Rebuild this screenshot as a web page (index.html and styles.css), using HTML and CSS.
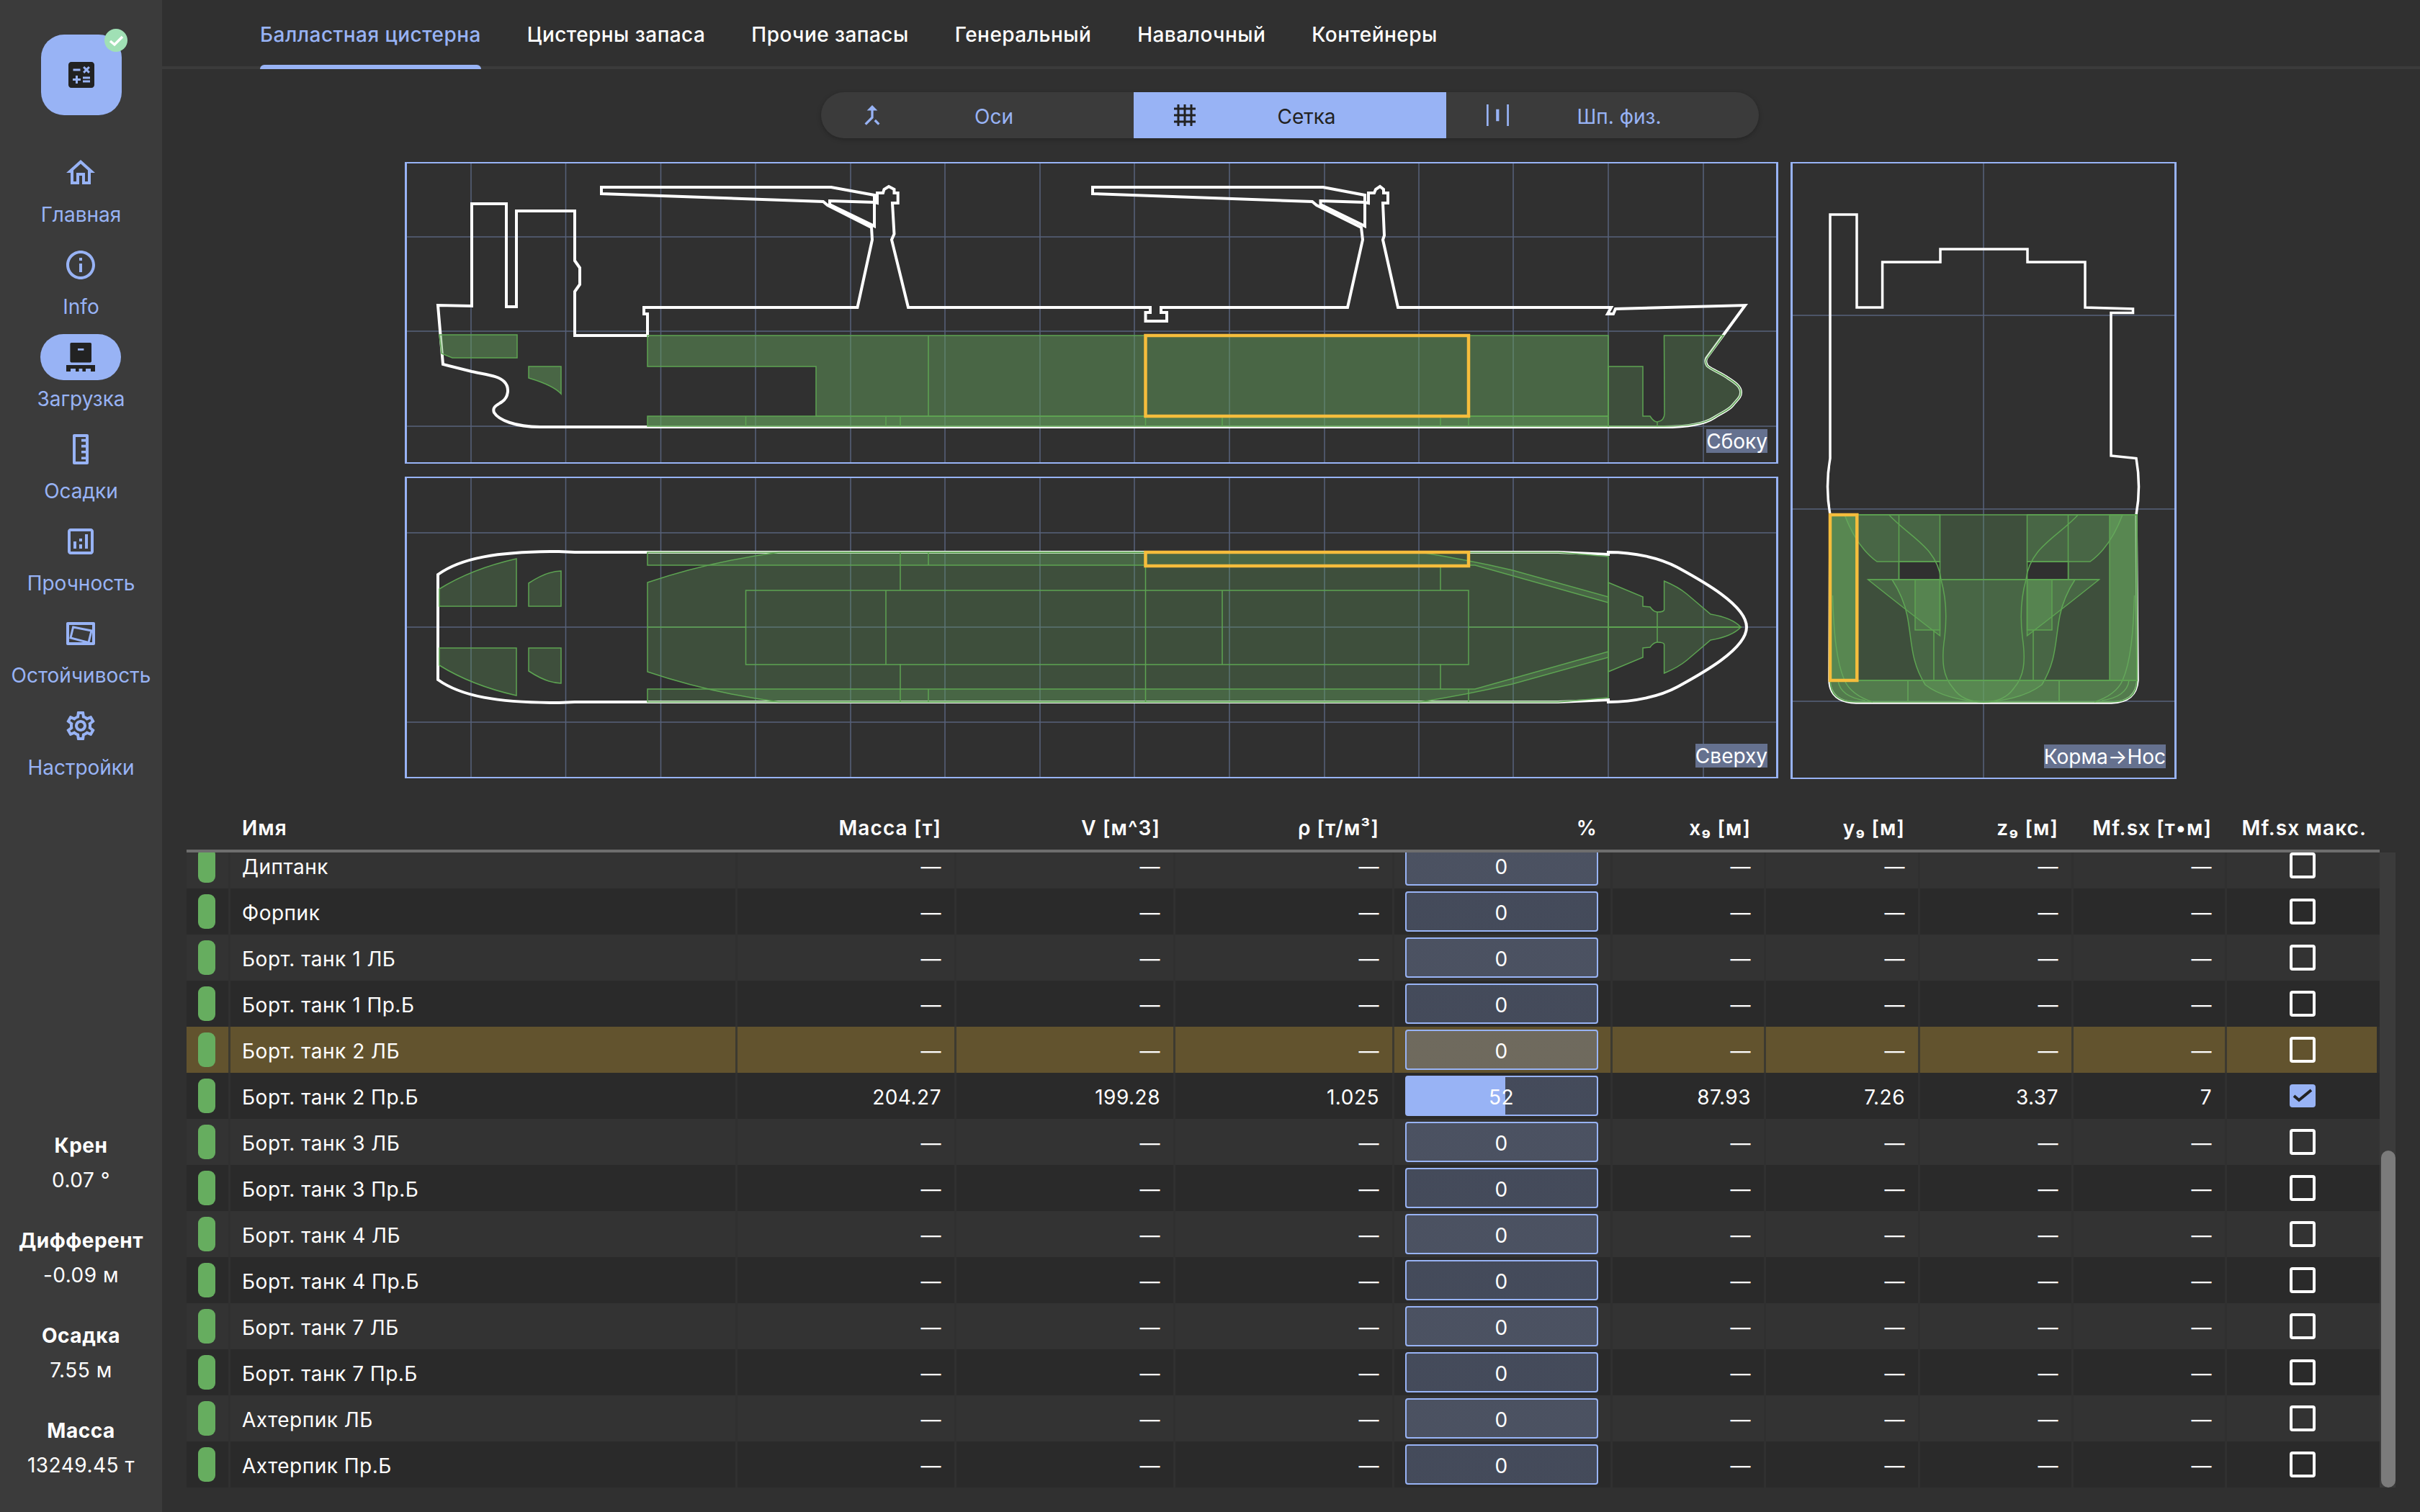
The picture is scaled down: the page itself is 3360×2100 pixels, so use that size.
FILE: index.html
```html
<!DOCTYPE html>
<html lang="ru">
<head>
<meta charset="utf-8">
<title>Загрузка</title>
<link rel="stylesheet" href="styles.css">
</head>
<body>
<aside class="sidebar">
  <div class="logo">
    <svg class="logo-icon" viewBox="0 0 24 24"><path d="M19 3H5c-1.1 0-2 .9-2 2v14c0 1.1.9 2 2 2h14c1.1 0 2-.9 2-2V5c0-1.1-.9-2-2-2zm-5.97 4.06L14.09 6l1.41 1.41L16.91 6l1.06 1.06-1.41 1.41 1.41 1.41-1.06 1.06-1.41-1.4-1.41 1.41-1.06-1.06 1.41-1.41-1.41-1.42zm-6.78.66h5v1.5h-5v-1.5zM11.5 16h-2v2H8v-2H6v-1.5h2v-2h1.5v2h2V16zm6.5 1.25h-5v-1.5h5v1.5zm0-2.5h-5v-1.5h5v1.5z"/></svg>
    <span class="badge"><svg viewBox="0 0 32 32"><path d="M8 17l6 5 11-11"/></svg></span>
  </div>
  <nav class="nav">
    <a class="nav-item"><span class="pill"><svg viewBox="0 0 24 24"><path d="M12 5.69l5 4.5V18h-2v-6H9v6H7v-7.81l5-4.5M12 3L2 12h3v8h6v-6h2v6h6v-8h3L12 3z"/></svg></span><span class="nav-label">Главная</span></a>
    <a class="nav-item"><span class="pill"><svg viewBox="0 0 24 24"><path d="M11 7h2v2h-2zm0 4h2v6h-2zm1-9C6.48 2 2 6.48 2 12s4.48 10 10 10 10-4.48 10-10S17.52 2 12 2zm0 18c-4.41 0-8-3.59-8-8s3.59-8 8-8 8 3.59 8 8-3.59 8-8 8z"/></svg></span><span class="nav-label">Info</span></a>
    <a class="nav-item active"><span class="pill"><svg viewBox="0 0 24 24"><path d="M5.5 2h13.2c.4 0 .8.4.8.8v12.1c0 .4-.4.8-.8.8H5.5c-.4 0-.8-.4-.8-.8V2.800c0-.4.4-.8.8-.8zM10 6v1.400h4.200V6zM2 17.500h20V22h-3v-2h-3.500v2h-2.300v-2h-2.400v2H8.500v-2H5v2H2z" fill-rule="evenodd"/></svg></span><span class="nav-label">Загрузка</span></a>
    <a class="nav-item"><span class="pill"><svg viewBox="0 0 24 24"><path fill-rule="evenodd" d="M7.500 1.500h9c.6 0 1 .4 1 1v19c0 .6-.4 1-1 1h-9c-.6 0-1-.4-1-1v-19c0-.6.4-1 1-1zM8.500 3.500v17h7V19h-3v-1.800h3v-2.400h-3V13h3v-2.300h-3V8.900h3V6.700h-3V4.900h3V3.500z"/></svg></span><span class="nav-label">Осадки</span></a>
    <a class="nav-item"><span class="pill"><svg viewBox="0 0 24 24"><path d="M19 3H5c-1.100 0-2 .9-2 2v14c0 1.100.9 2 2 2h14c1.100 0 2-.9 2-2V5c0-1.100-.9-2-2-2zm0 16H5V5h14v14zM7 12h2v5H7zm8-5h2v10h-2zm-4 7h2v3h-2zm0-4h2v2h-2z"/></svg></span><span class="nav-label">Прочность</span></a>
    <a class="nav-item"><span class="pill"><svg viewBox="0 0 24 24"><path fill-rule="evenodd" d="M3 4h18c.6 0 1 .4 1 1v14c0 .6-.4 1-1 1H3c-.6 0-1-.4-1-1V5c0-.6.4-1 1-1zm1 2v12h16V6z"/><path class="tilt" d="M6.800 7.500L19.500 10l-2 8.200L5 15z"/></svg></span><span class="nav-label">Остойчивость</span></a>
    <a class="nav-item"><span class="pill"><svg viewBox="0 0 24 24"><path d="M19.430 12.980c.04-.32.07-.64.07-.98 0-.34-.03-.66-.07-.98l2.110-1.650c.19-.15.24-.42.12-.64l-2-3.460c-.09-.16-.26-.25-.44-.25-.06 0-.12.01-.17.03l-2.490 1c-.52-.4-1.080-.73-1.690-.98l-.38-2.650C14.460 2.180 14.250 2 14 2h-4c-.25 0-.46.18-.49.42l-.38 2.650c-.61.25-1.170.59-1.690.98l-2.490-1c-.06-.02-.12-.03-.18-.03-.17 0-.34.09-.43.25l-2 3.460c-.13.22-.07.49.12.64l2.110 1.650c-.04.32-.07.65-.07.98 0 .33.03.66.07.98l-2.110 1.650c-.19.15-.24.42-.12.64l2 3.460c.09.16.26.25.44.25.06 0 .12-.01.17-.03l2.490-1c.52.4 1.080.73 1.690.98l.38 2.650c.03.24.24.42.49.42h4c.25 0 .46-.18.49-.42l.38-2.650c.61-.25 1.170-.59 1.690-.98l2.490 1c.06.02.12.03.18.03.17 0 .34-.09.43-.25l2-3.460c.12-.22.07-.49-.12-.64l-2.110-1.650zm-1.980-1.710c.04.31.05.52.05.73 0 .21-.02.43-.05.73l-.14 1.130.89.7 1.080.84-.7 1.210-1.270-.51-1.040-.42-.9.68c-.43.32-.84.56-1.250.73l-1.060.43-.16 1.130-.2 1.350h-1.400l-.19-1.350-.16-1.130-1.060-.43c-.43-.18-.83-.41-1.230-.71l-.91-.7-1.060.43-1.270.51-.7-1.210 1.080-.84.89-.7-.14-1.130c-.03-.31-.05-.54-.05-.74s.02-.43.05-.73l.14-1.130-.89-.7-1.080-.84.7-1.210 1.270.51 1.040.42.9-.68c.43-.32.84-.56 1.250-.73l1.060-.43.16-1.130.2-1.350h1.390l.19 1.350.16 1.130 1.060.43c.43.18.83.41 1.230.71l.91.7 1.060-.43 1.270-.51.7 1.210-1.070.85-.89.7.14 1.130zM12 8c-2.210 0-4 1.790-4 4s1.790 4 4 4 4-1.790 4-4-1.790-4-4-4zm0 6c-1.100 0-2-.9-2-2s.9-2 2-2 2 .9 2 2-.9 2-2 2z"/></svg></span><span class="nav-label">Настройки</span></a>
  </nav>
  <div class="stats">
    <div class="stat"><b>Крен</b><span>0.07 °</span></div>
    <div class="stat"><b>Дифферент</b><span>-0.09 м</span></div>
    <div class="stat"><b>Осадка</b><span>7.55 м</span></div>
    <div class="stat"><b>Масса</b><span>13249.45 т</span></div>
  </div>
</aside>

<main class="main">
  <div class="tabs">
    <a class="tab active">Балластная цистерна</a>
    <a class="tab">Цистерны запаса</a>
    <a class="tab">Прочие запасы</a>
    <a class="tab">Генеральный</a>
    <a class="tab">Навалочный</a>
    <a class="tab">Контейнеры</a>
  </div>

  <div class="segments">
    <a class="seg"><svg viewBox="1 1 22 22"><path d="M17 20.410L18.410 19 15 15.590 13.590 17 17 20.410zM7.500 8H11v5.590L5.590 19 7 20.410l6-6V8h3.500L12 3.500 7.500 8z"/></svg><span>Оси</span></a>
    <a class="seg active"><svg viewBox="0 0 24 24"><path d="M22 7V5h-3V2h-2v3h-4V2h-2v3H7V2H5v3H2v2h3v4H2v2h3v4H2v2h3v3h2v-3h4v3h2v-3h4v3h2v-3h3v-2h-3v-4h3v-2h-3V7h3zM7 7h4v4H7V7zm0 10v-4h4v4H7zm10 0h-4v-4h4v4zm0-6h-4V7h4v4z"/></svg><span>Сетка</span></a>
    <a class="seg"><svg viewBox="0 0 24 24"><path d="M2 2h1.800v20H2zM20.800 2h1.800v20h-1.800zM10.800 6.500h2.800v11h-2.800z"/></svg><span>Шп. физ.</span></a>
  </div>

  <div class="views">
    <section class="view view-side">
      <svg class="plot" viewBox="565 227 1901 415">
        <g class="grid">
          <path d="M654 227V642M785.500 227V642M917.500 227V642M1049 227V642M1181 227V642M1312 227V642M1444 227V642M1575 227V642M1707 227V642M1839 227V642M1970 227V642M2101 227V642M2233 227V642M2365 227V642M564 329H2467M564 460H2467M564 592H2467"/>
        </g>
        <path class="hull" d="M798 466L798 405 805 395 805 372 798 362 798 293 717 293 717 426 703 426 703 283 655 283 655 425 608 424 615 506 655 516C678 521 692 522 700 530C708 538 706 552 697 558C690 563 683 565 686 573C692 583 715 593 750 593L2310 593C2335 593 2365 590 2380 580C2392 572 2400 570 2405.600 563C2412 555 2417 552 2417 545C2417 537 2410 532 2399 525C2390 518 2375 513 2370.500 508C2367 503 2368 500 2369.500 497L2423 424 2243 429 2240 436 2232 436 2237 427 1941 427 1920 333 1922 327 1920 282 1927 282 1927 268 1921 268 1921 263 1916 259 1910 263 1908 268 1900 268 1900 282 1895 281 1895 271 1837 260 1517 260 1517 269 1822 280 1828 285 1890 316 1892 333 1871 427 1612 427 1612 434 1620 434 1620 446 1590.500 446 1590.500 434 1597 434 1597 427 1261 427 1238 333 1241.500 325 1239 282 1246.700 282 1246.700 268 1241.500 268 1241.500 263 1234 259 1227.500 263 1226 268 1218 268 1218 282 1214 281 1214 271 1154 260 835 260 835 269 1143 280 1149 285 1210 316 1211 333 1190.500 427 894 427 894 436 899 436 899 466Z"/>
        <path class="hull" d="M1152 279L1214 281 1214 314 1152 284ZM1833.500 279L1895 281 1895 314 1833.500 284Z"/>
        <path class="f2" d="M610 465H718V497H628L613 491Z"/>
        <path class="f2" d="M734 509H779V547Q768 535 734 525Z"/>
        <path class="f2" d="M899 466H2233V578H1133V509H899Z"/>
        <path class="f3" d="M899 578H2233V592H899Z"/>
        <path class="f" d="M2233 509H2281V578H2291Q2296 586 2301 586Q2312 584 2311 572L2310.500 466H2393L2370.500 497C2368 500 2367 503 2370.500 508C2375 513 2390 518 2399 525C2410 532 2417 537 2417 545C2417 552 2412 555 2405.600 563C2400 570 2392 572 2380 580C2365 590 2335 592 2310 592H2233Z"/>
        <path class="l" d="M1289 466V578M1035.500 578V592M1230 578V592M1250 578V592M1590.500 578V592M1697 578V592M2000 578V592M2039 578V592M2301 586V592"/>
        <rect class="sel" x="1590.500" y="466" width="448.500" height="112"/>
      </svg>
      <span class="cap">Сбоку</span>
    </section>

    <section class="view view-top">
      <svg class="plot" viewBox="565 664 1901 415">
        <defs>
          <g id="top-half">
            <path class="f" d="M610 818Q655 790 717 776V842H610Z"/>
            <path class="f" d="M734 810Q760 793 779 793V842H734Z"/>
            <path class="f" d="M899 767H1972Q2040 778 2100 792L2233 829V837L2048 785H899Z"/>
            <path class="l" d="M1250 767V820M1289 767V785M1590.500 767V871M2000 785V820M2039 767V785"/>
            <path class="f" d="M2233 809L2281 829V842L2291 843Q2296 850 2301 850Q2310 850 2310.600 847V807Q2330 815 2342 825L2375 853Q2405 858 2417 871H2233Z"/>
          </g>
        </defs>
        <g class="grid">
          <path d="M654 664V1079M785.500 664V1079M917.500 664V1079M1049 664V1079M1181 664V1079M1312 664V1079M1444 664V1079M1575 664V1079M1707 664V1079M1839 664V1079M1970 664V1079M2101 664V1079M2233 664V1079M2365 664V1079M564 740H2467M564 871H2467M564 1003H2467"/>
        </g>
        <path class="hull" d="M608 798C640 775 690 766 776 766L798 767 2163 767 2233 770V767C2270 767 2305 775 2329 788C2360 805 2425 840 2425 871C2425 902 2360 937 2329 954C2305 967 2270 975 2233 975V972L2163 975 798 975 776 976C690 976 640 967 608 944Z"/>
        <path class="f" d="M899 809Q985 780 1082 767H2163L2233 773V969L2163 975H1082Q985 962 899 933Z"/>
        <use href="#top-half"/>
        <use href="#top-half" transform="matrix(1 0 0 -1 0 1742)"/>
        <path class="l" d="M899 871H1035.500M2039 871H2417M2301 850V892"/>
        <rect class="l" x="1035.500" y="820" width="1003.500" height="103"/>
        <path class="l" d="M1230 820V923M1697 820V923"/>
        <rect class="sel" x="1590.500" y="767" width="448.500" height="19"/>
      </svg>
      <span class="cap">Сверху</span>
    </section>

    <section class="view view-back">
      <svg class="plot" viewBox="2489 227 530 853">
        <defs>
          <g id="back-half">
            <path class="f" d="M2561 715Q2578 760 2606 780H2693.500V715Z"/>
            <path class="f" d="M2593.600 805H2693.500V883Q2650 850 2593.600 805Z"/>
            <path class="f" d="M2659 805H2693.500V875H2659Z"/>
            <path class="l" d="M2636.500 715V805M2685 875V945M2649 945V975"/>
            <path class="l" d="M2622.700 715C2650 745 2690 760 2695 805C2702 830 2703 860 2700 885C2695 920 2698 940 2712 956Q2725 975 2754 975"/>
            <path class="l" d="M2544.500 827C2546 880 2550 920 2561 945Q2570 965 2600 975"/>
            <path class="f3" d="M2541 715H2579V945H2541Z"/>
            <path class="l" d="M2552 945Q2555 968 2590 973"/>
          </g>
        </defs>
        <g class="grid">
          <path d="M2754 227V1080M2488 438H3020M2488 707H3020M2488 974H3020"/>
        </g>
        <path class="hull hull-thin" d="M2541 298H2578V427H2613.600V364H2694V346H2815V364H2895V427L2961.500 429V434.500H2931V633L2966 636.500Q2973 676 2966 715L2968 945Q2966 975 2931.600 976H2577Q2541 975 2540 945L2541 715Q2534 676 2541 636.500Z"/>
        <path class="f" fill-rule="evenodd" d="M2541 715H2967V945H2541ZM2636.500 780H2693.500V805H2636.500ZM2814.600 780H2871.700V805H2814.600Z"/>
        <path class="f" d="M2627 805C2640 825 2645 840 2648 855C2655 890 2652 917 2673 951Q2700 972 2754 975Q2808 972 2835 951C2856 917 2853 890 2860 855C2863 840 2868 825 2881 805Z"/>
        <use href="#back-half"/>
        <use href="#back-half" transform="matrix(-1 0 0 1 5508 0)"/>
        <path class="l" d="M2593.600 805H2915"/>
        <path class="f3" d="M2541 945H2967Q2967 975 2931 975H2577Q2541 975 2541 945Z"/>
        <rect class="sel" x="2541" y="715" width="37.300" height="230"/>
      </svg>
      <span class="cap">Корма→Нос</span>
    </section>
  </div>

  <div class="table">
    <div class="row head">
      <div class="cell"></div>
      <div class="cell name">Имя</div>
      <div class="cell num">Масса [т]</div>
      <div class="cell num">V [м^3]</div>
      <div class="cell num">ρ [т/м³]</div>
      <div class="cell num">%</div>
      <div class="cell num">x₉ [м]</div>
      <div class="cell num">y₉ [м]</div>
      <div class="cell num">z₉ [м]</div>
      <div class="cell num">Mf.sx [т•м]</div>
      <div class="cell num">Mf.sx макс.</div>
    </div>
    <div class="table-body">
      <div class="rows">
        <div class="row first"><div class="cell"><i class="mark"></i></div><div class="cell name">Диптанк</div><div class="cell num">—</div><div class="cell num">—</div><div class="cell num">—</div><div class="cell mid"><div class="level">0</div></div><div class="cell num">—</div><div class="cell num">—</div><div class="cell num">—</div><div class="cell num">—</div><div class="cell mid"><i class="check"></i></div></div>
        <div class="row"><div class="cell"><i class="mark"></i></div><div class="cell name">Форпик</div><div class="cell num">—</div><div class="cell num">—</div><div class="cell num">—</div><div class="cell mid"><div class="level">0</div></div><div class="cell num">—</div><div class="cell num">—</div><div class="cell num">—</div><div class="cell num">—</div><div class="cell mid"><i class="check"></i></div></div>
        <div class="row"><div class="cell"><i class="mark"></i></div><div class="cell name">Борт. танк 1 ЛБ</div><div class="cell num">—</div><div class="cell num">—</div><div class="cell num">—</div><div class="cell mid"><div class="level">0</div></div><div class="cell num">—</div><div class="cell num">—</div><div class="cell num">—</div><div class="cell num">—</div><div class="cell mid"><i class="check"></i></div></div>
        <div class="row"><div class="cell"><i class="mark"></i></div><div class="cell name">Борт. танк 1 Пр.Б</div><div class="cell num">—</div><div class="cell num">—</div><div class="cell num">—</div><div class="cell mid"><div class="level">0</div></div><div class="cell num">—</div><div class="cell num">—</div><div class="cell num">—</div><div class="cell num">—</div><div class="cell mid"><i class="check"></i></div></div>
        <div class="row selected"><div class="cell"><i class="mark"></i></div><div class="cell name">Борт. танк 2 ЛБ</div><div class="cell num">—</div><div class="cell num">—</div><div class="cell num">—</div><div class="cell mid"><div class="level">0</div></div><div class="cell num">—</div><div class="cell num">—</div><div class="cell num">—</div><div class="cell num">—</div><div class="cell mid"><i class="check"></i></div></div>
        <div class="row"><div class="cell"><i class="mark"></i></div><div class="cell name">Борт. танк 2 Пр.Б</div><div class="cell num">204.27</div><div class="cell num">199.28</div><div class="cell num">1.025</div><div class="cell mid"><div class="level" style="--p:52%">52</div></div><div class="cell num">87.93</div><div class="cell num">7.26</div><div class="cell num">3.37</div><div class="cell num">7</div><div class="cell mid"><i class="check on"><svg viewBox="0 0 36 32"><path d="M6 16l7 6L30 8"/></svg></i></div></div>
        <div class="row"><div class="cell"><i class="mark"></i></div><div class="cell name">Борт. танк 3 ЛБ</div><div class="cell num">—</div><div class="cell num">—</div><div class="cell num">—</div><div class="cell mid"><div class="level">0</div></div><div class="cell num">—</div><div class="cell num">—</div><div class="cell num">—</div><div class="cell num">—</div><div class="cell mid"><i class="check"></i></div></div>
        <div class="row"><div class="cell"><i class="mark"></i></div><div class="cell name">Борт. танк 3 Пр.Б</div><div class="cell num">—</div><div class="cell num">—</div><div class="cell num">—</div><div class="cell mid"><div class="level">0</div></div><div class="cell num">—</div><div class="cell num">—</div><div class="cell num">—</div><div class="cell num">—</div><div class="cell mid"><i class="check"></i></div></div>
        <div class="row"><div class="cell"><i class="mark"></i></div><div class="cell name">Борт. танк 4 ЛБ</div><div class="cell num">—</div><div class="cell num">—</div><div class="cell num">—</div><div class="cell mid"><div class="level">0</div></div><div class="cell num">—</div><div class="cell num">—</div><div class="cell num">—</div><div class="cell num">—</div><div class="cell mid"><i class="check"></i></div></div>
        <div class="row"><div class="cell"><i class="mark"></i></div><div class="cell name">Борт. танк 4 Пр.Б</div><div class="cell num">—</div><div class="cell num">—</div><div class="cell num">—</div><div class="cell mid"><div class="level">0</div></div><div class="cell num">—</div><div class="cell num">—</div><div class="cell num">—</div><div class="cell num">—</div><div class="cell mid"><i class="check"></i></div></div>
        <div class="row"><div class="cell"><i class="mark"></i></div><div class="cell name">Борт. танк 7 ЛБ</div><div class="cell num">—</div><div class="cell num">—</div><div class="cell num">—</div><div class="cell mid"><div class="level">0</div></div><div class="cell num">—</div><div class="cell num">—</div><div class="cell num">—</div><div class="cell num">—</div><div class="cell mid"><i class="check"></i></div></div>
        <div class="row"><div class="cell"><i class="mark"></i></div><div class="cell name">Борт. танк 7 Пр.Б</div><div class="cell num">—</div><div class="cell num">—</div><div class="cell num">—</div><div class="cell mid"><div class="level">0</div></div><div class="cell num">—</div><div class="cell num">—</div><div class="cell num">—</div><div class="cell num">—</div><div class="cell mid"><i class="check"></i></div></div>
        <div class="row"><div class="cell"><i class="mark"></i></div><div class="cell name">Ахтерпик ЛБ</div><div class="cell num">—</div><div class="cell num">—</div><div class="cell num">—</div><div class="cell mid"><div class="level">0</div></div><div class="cell num">—</div><div class="cell num">—</div><div class="cell num">—</div><div class="cell num">—</div><div class="cell mid"><i class="check"></i></div></div>
        <div class="row"><div class="cell"><i class="mark"></i></div><div class="cell name">Ахтерпик Пр.Б</div><div class="cell num">—</div><div class="cell num">—</div><div class="cell num">—</div><div class="cell mid"><div class="level">0</div></div><div class="cell num">—</div><div class="cell num">—</div><div class="cell num">—</div><div class="cell num">—</div><div class="cell mid"><i class="check"></i></div></div>
      </div>
      <div class="scrollbar"><div class="thumb"></div></div>
    </div>
  </div>
</main>
</body>
</html>
```

FILE: styles.css
```css
* { box-sizing: border-box; }
html, body { margin: 0; height: 2100px; }
body {
  display: flex;
  background: #303030;
  color: #fff;
  font-family: Inter, "Noto Sans", sans-serif;
  font-size: 28px;
  overflow: hidden;
}

/* Sidebar */
.sidebar {
  width: 225px;
  height: 2100px;
  flex: none;
  background: #3b3b3b;
  display: flex;
  flex-direction: column;
  align-items: center;
  padding-top: 48px;
}
.logo {
  position: relative;
  width: 112px;
  height: 112px;
  border-radius: 32px;
  background: #98b3f5;
  display: flex;
  align-items: center;
  justify-content: center;
  margin-bottom: 48px;
}
.logo-icon { width: 48px; height: 48px; fill: #222; }
.badge {
  position: absolute;
  right: -8px;
  top: -8px;
  width: 32px;
  height: 32px;
  border-radius: 50%;
  background: #a0e0b5;
}
.badge svg { display: block; fill: none; stroke: #fff; stroke-width: 3.500; }
.nav { display: flex; flex-direction: column; align-items: center; }
.nav-item {
  height: 128px;
  display: flex;
  flex-direction: column;
  align-items: center;
  color: #98b3f5;
}
.pill {
  width: 112px;
  height: 64px;
  border-radius: 32px;
  display: flex;
  align-items: center;
  justify-content: center;
  flex: none;
}
.pill svg { width: 48px; height: 48px; fill: #98b3f5; }
.pill .tilt { fill: none; stroke: #98b3f5; stroke-width: 1.500; }
.nav-item.active .pill { background: #98b3f5; }
.nav-item.active .pill svg { fill: #222; }
.nav-label { line-height: 40px; margin-top: 6px; white-space: nowrap; }
.stats {
  margin-top: auto;
  padding-bottom: 45px;
  display: flex;
  flex-direction: column;
  gap: 44px;
  align-items: center;
  letter-spacing: .5px;
}
.stat { display: flex; flex-direction: column; align-items: center; gap: 8px; line-height: 40px; }
.stat b { font-weight: 700; }

/* Main */
.main { flex: 1; min-width: 0; display: flex; flex-direction: column; align-items: center; }
.tabs {
  width: 100%;
  height: 96px;
  border-bottom: 4px solid #3b3b3b;
  display: flex;
  padding-left: 136px;
  gap: 64px;
  flex: none;
  letter-spacing: .45px;
}
.tab {
  position: relative;
  height: 96px;
  line-height: 96px;
  font-weight: 500;
  white-space: nowrap;
}
.tab.active { color: #98b3f5; }
.tab.active::after {
  content: "";
  position: absolute;
  left: 0;
  right: 0;
  top: 90px;
  height: 6px;
  border-radius: 6px 6px 0 0;
  background: #98b3f5;
}

.segments {
  margin-top: 32px;
  width: 1302px;
  height: 64px;
  border-radius: 32px;
  overflow: hidden;
  background: #3b3b3b;
  display: flex;
  flex: none;
  box-shadow: 0 2px 6px rgba(0, 0, 0, .25);
  margin-left: -3px;
}
.seg {
  flex: 1;
  display: flex;
  align-items: center;
  padding-left: 53px;
  color: #98b3f5;
}
.seg svg { width: 36px; height: 36px; fill: #98b3f5; flex: none; }
.seg span { width: 302px; text-align: center; padding-top: 3px; }
.seg.active { background: #98b3f5; color: #222; }
.seg.active svg { fill: #222; }

/* Views */
.views {
  margin-top: 33px;
  margin-left: -1px;
  display: grid;
  grid-template-columns: 1907px 536px;
  grid-template-rows: 419px 419px;
  gap: 18px 17px;
  flex: none;
}
.view { position: relative; border: solid #98b3f5; border-width: 2px 3px; overflow: hidden; }
.view-back { grid-column: 2; grid-row: 1 / span 2; height: 857px; }
.plot { display: block; width: 100%; height: 100%; }
.cap {
  position: absolute;
  right: 12px;
  bottom: 13px;
  height: 33px;
  background: #65718f;
  line-height: 35px;
  white-space: nowrap;
}
.grid path { fill: none; stroke: rgba(152, 179, 245, .38); stroke-width: 1.500; }
.hull { fill: none; stroke: #fff; stroke-width: 4; }
.hull-thin { stroke-width: 3.500; }
.f, .f2, .f3 { stroke: #5da452; stroke-width: 1.500; }
.f { fill: rgba(105, 170, 95, .25); }
.f2 { fill: rgba(105, 170, 95, .44); }
.f3 { fill: rgba(105, 170, 95, .62); }
.l { fill: none; stroke: #5da452; stroke-width: 1.500; }
.sel { fill: none; stroke: #f5bd3c; stroke-width: 4.500; }

/* Table */
.table { margin-top: 39px; width: 3067px; align-self: flex-start; margin-left: 34px; flex: none; letter-spacing: .5px; }
.row {
  display: grid;
  grid-template-columns: 58px 704px 304px 304px 304px 303px 213px 214px 213px 213px 215px;
  height: 64px;
  background: #2a2a2a;
}
.rows .row:nth-child(odd) { background: #333; }
.rows .row.selected { background: #62532e; border-right: 4px solid #2e2e2e; }
.cell {
  display: flex;
  align-items: center;
  border-left: 3px solid #303030;
  min-width: 0;
  white-space: nowrap;
}
.cell:first-child { border-left: 0; justify-content: center; }
.rows .selected .cell { border-left-color: #3d3a30; }
.name { padding-left: 16px; padding-top: 3px; }
.num { justify-content: flex-end; padding-right: 18px; padding-top: 3px; }
.mid { justify-content: center; }
.head {
  width: 3045px;
  height: 64px;
  background: transparent;
  border-bottom: 4px solid #6e6e6e;
  font-weight: 600;
  letter-spacing: 1.100px;
}
.head .cell { border-left-color: transparent; padding-top: 0; }
.table-body { display: flex; height: 882px; }
.rows { width: 3045px; height: 882px; overflow: hidden; }
.first { margin-top: -14px; }
.mark { display: block; width: 24px; height: 48px; border-radius: 9px; background: #66ad5f; margin-left: -2px; }
.level {
  --p: 0%;
  width: 268px;
  height: 56px;
  margin-left: -3px;
  border: 2px solid #98b3f5;
  border-radius: 4px;
  text-align: center;
  line-height: 56px;
  background: linear-gradient(to right, #98b3f5 var(--p), rgba(152, 179, 245, .24) var(--p));
}
.check {
  display: block;
  width: 36px;
  height: 36px;
  margin-left: -3px;
  border: 4px solid #fff;
  border-radius: 4px;
}
.check.on { background: #98b3f5; border: 0; height: 32px; }
.check.on svg { display: block; fill: none; stroke: #222; stroke-width: 4; width: 36px; height: 32px; }
.scrollbar {
  width: 22px;
  background: #3b3b3b;
  display: flex;
  flex-direction: column;
  justify-content: flex-end;
  align-items: flex-end;
}
.thumb { width: 20px; height: 468px; border-radius: 10px; background: #7b7b7b; }
```
